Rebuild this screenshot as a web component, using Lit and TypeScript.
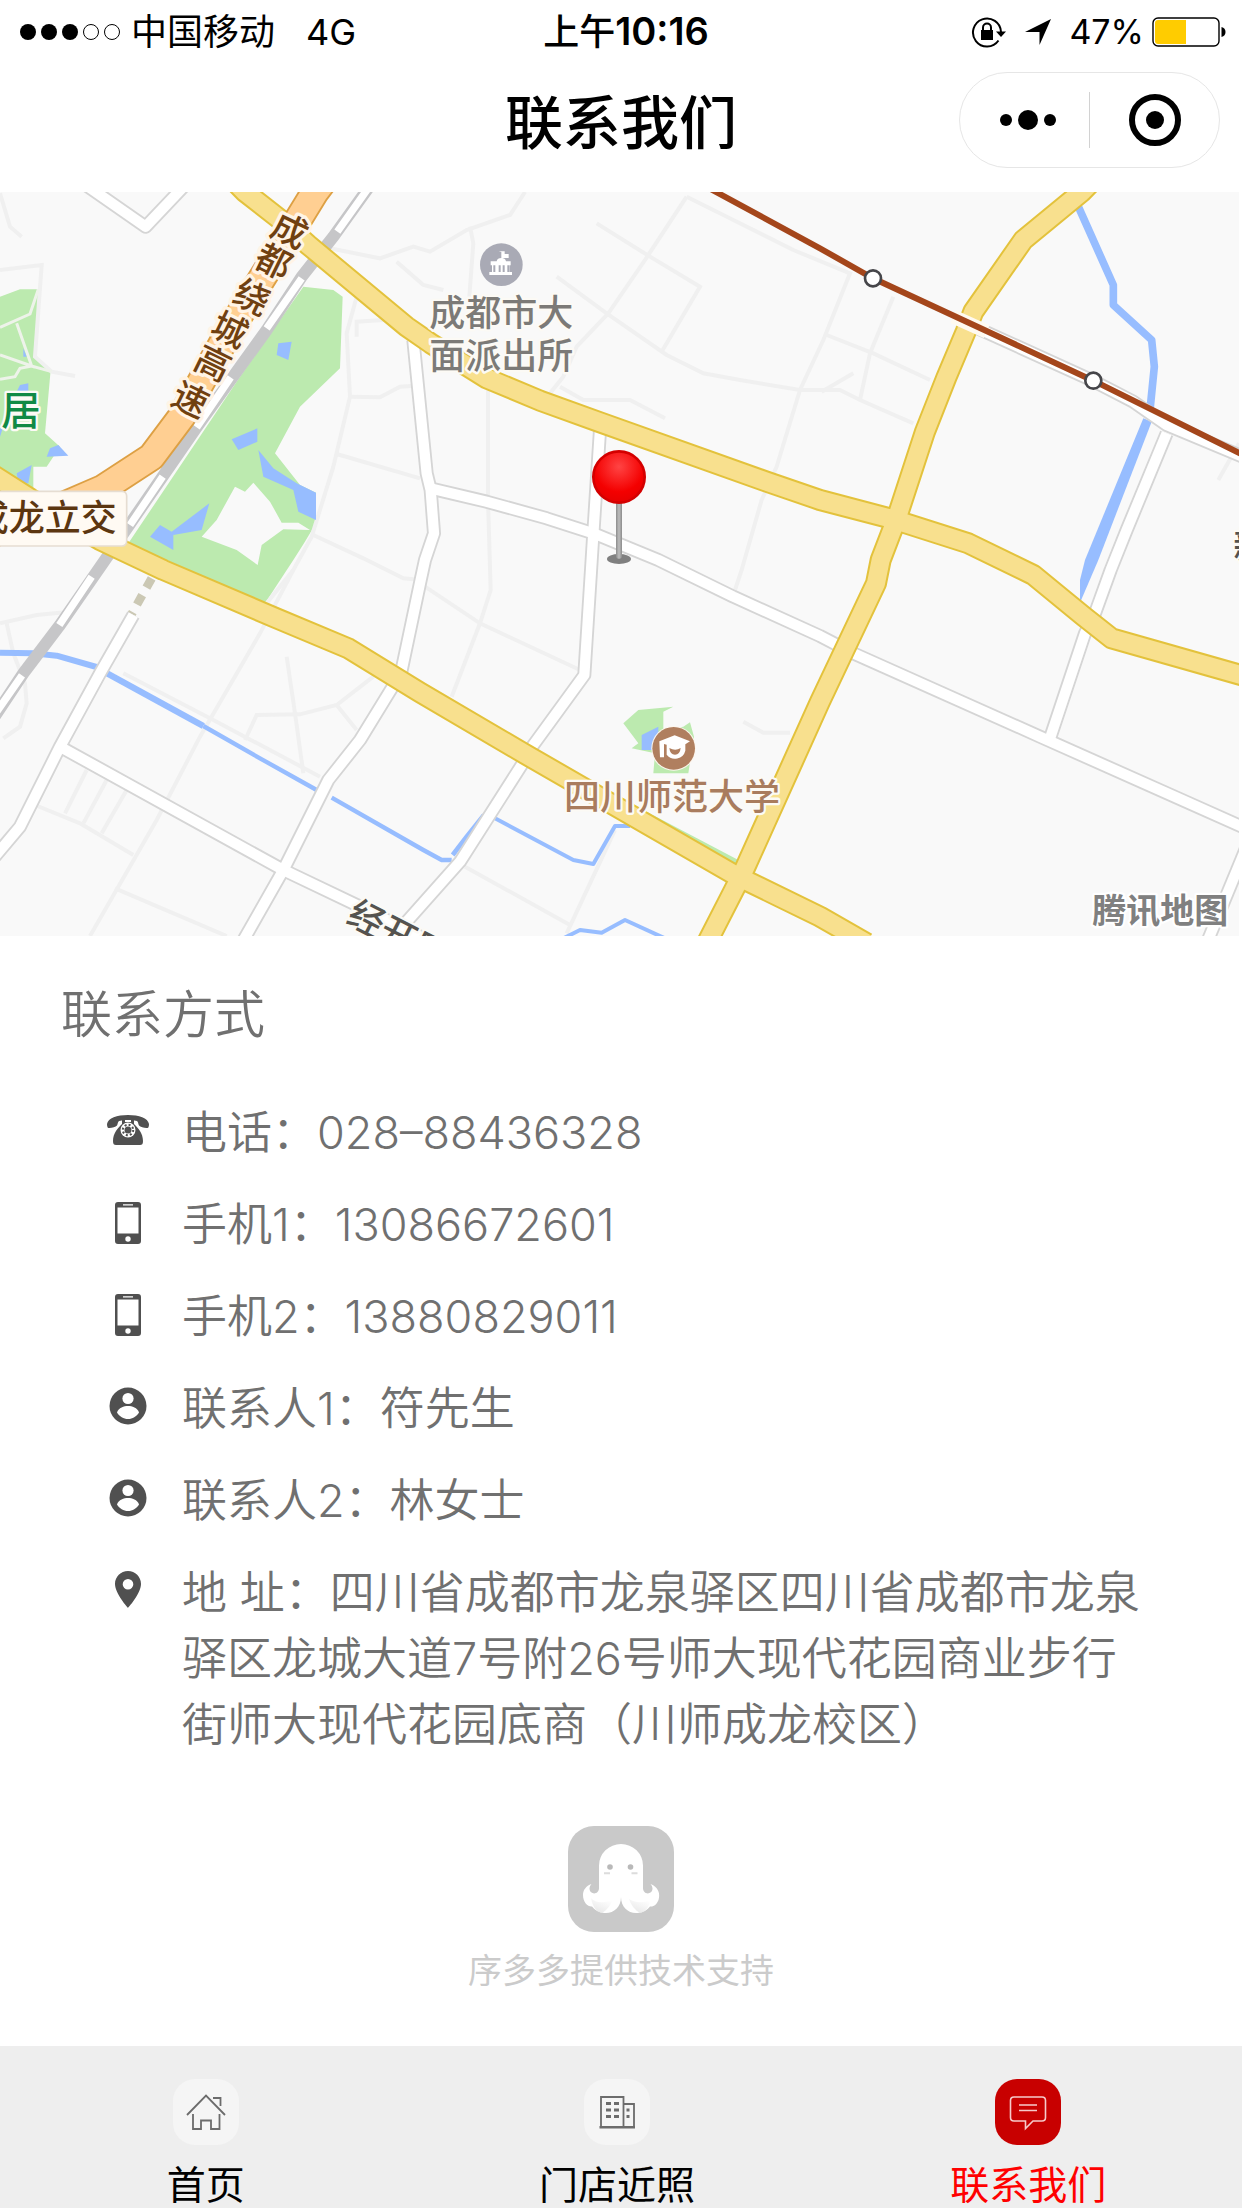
import { LitElement, html, css, svg } from "lit";
import { customElement, property } from "lit/decorators.js";
import { classMap } from "lit/directives/class-map.js";

const FONT = css`Inter, "Noto Sans CJK SC", sans-serif`;

/* ---------- map data (canvas units: 3 per CSS pixel) ---------- */

const minorRoads = [
  "M0 240 L125 225 L105 500 L155 545 L225 558",
  "M0 10 L30 110 L65 140",
  "M990 175 L1140 205 L1240 170 L1290 185 L1400 120 L1530 75 L1575 6",
  "M1410 110 L1420 160 L1408 320",
  "M1190 215 L1270 285 L1330 300",
  "M1070 320 L1040 430 L1050 620 L1000 830 L935 1040 L880 1140 L800 1240",
  "M1070 440 L1070 395 L1150 390",
  "M1050 620 L1140 622 L1200 590 L1235 588",
  "M1010 792 L1260 865",
  "M940 1035 L1090 1105 L1210 1165 L1265 1170",
  "M1464 600 L1464 930 L1472 1200 L1440 1300 L1355 1520",
  "M1275 1190 L1440 1300 L1740 1440",
  "M2060 20 L1935 210 L1825 370 L1730 470 L1690 560 L1650 610",
  "M1790 100 L1950 200 L2100 290 L1985 485",
  "M1670 260 L1820 370 L2000 495 L2110 550 L2220 570 L2400 600 L2520 600 L2580 630 L2740 700",
  "M1680 590 L1750 630 L1890 630 L1995 685",
  "M2060 20 L2200 90 L2380 180 L2550 250 L2470 450 L2400 600 L2330 830 L2285 930 L2225 1140 L2205 1200",
  "M2680 320 L2610 490 L2580 630",
  "M2480 435 L2620 490 L2790 570",
  "M2465 605 L2560 550",
  "M3717 760 L3655 870",
  "M0 1300 L110 1275 L210 1265",
  "M20 1300 L40 1390 L75 1480 L80 1540 L60 1610 L10 1645",
  "M880 1140 L780 1330 L600 1640 L470 1890 L270 2238",
  "M860 1400 L885 1570 L910 1750",
  "M735 1650 L770 1575 L900 1573 L1010 1545 L1120 1460",
  "M1010 1545 L1070 1620",
  "M370 1450 L640 1590 L960 1760",
  "M105 1845 L240 1900 L400 1995",
  "M260 1740 L195 1870 M320 1770 L250 1900 M380 1800 L305 1930",
  "M345 2095 L680 2238",
  "M1395 2030 L1710 2205",
  "M1845 1920 L1770 2080 L1700 2230",
  "M2230 1595 L2290 1628 L2370 1628",
];

const whiteRoads = [
  "M250 -20 L437 110 L560 -20",
  "M1240 450 L1280 850 L1292 900 L1302 1030 L1275 1110 L1262 1170 L1205 1440 L1175 1495 L1080 1650 L985 1770 L850 2040 L725 2260",
  "M1290 895 L1460 935 L1640 985 L1780 1030 L1975 1110 L2200 1220 L2460 1338 L2560 1390 L3120 1640 L3535 1825 L3730 1912",
  "M1800 720 L1780 1030 L1775 1110 L1753 1455 L1600 1665 L1565 1725 L1380 2015 L1180 2240",
  "M400 1275 L300 1450 L180 1670 L60 1910 L-20 2005",
  "M180 1670 L850 2040 L1080 2150 L1300 2260",
  "M2900 400 L3270 568 L3400 635 L3500 705 L3740 805",
  "M3500 730 L3380 1020 L3332 1140 L3285 1270 L3255 1330 L3150 1645",
  "M3740 1970 L3620 2260",
];

const yellowRoads = [
  "M690 -40 L735 6 L840 88 L925 165 L1220 410 L1292 460 L1460 565 L1620 632 L1800 697 L2300 875 L2460 930 L2670 985 L2905 1060 L3100 1155 L3250 1278 L3335 1345 L3740 1460",
  "M3290 -40 L3245 6 L3070 150 L2920 365 L2897 425 L2840 560 L2775 725 L2690 985 L2642 1110 L2628 1180 L2460 1535 L2230 2045 L2120 2260",
  "M-20 855 L90 925 L300 1050 L490 1140 L825 1283 L1045 1375 L1260 1507 L1580 1695 L2210 2058 L2460 2180 L2600 2260",
];

const highway = "M980 -40 L945 6 L820 210 L690 420 L545 680 L455 800 L310 895 L160 960 L-20 1030";

const railway = "M1115 -20 L1000 140 L905 260 L800 420 L590 712 L315 1110 L180 1305 L70 1450 L-20 1585";
const railwayGaps =
  "M1115 -20 L1012 125 M905 265 L800 415 M692 562 L590 712 M488 860 L390 1005 M275 1160 L178 1305 M66 1456 L-20 1580";

const parks = [
  "M0 320 L60 298 L115 298 L108 500 L152 540 L135 730 L180 770 L140 830 L100 830 L100 920 L0 905Z",
  "M910 290 L1000 300 L1028 320 L1020 535 L900 650 L825 790 L900 885 L948 908 L948 1000 L912 1060 L880 1110 L795 1240 L385 1060 L720 560Z",
  "M1870 1600 L1915 1560 L2020 1550 L1990 1565 L1990 1620 L2050 1610 L2070 1597 L2082 1640 L2065 1750 L1960 1750 L1965 1690 L1895 1675 L1915 1660Z",
  "M1930 1860 L2215 2010 L2200 2030 L1930 1885Z",
];

const lakes = [
  "M835 460 L875 455 L865 510 L830 495Z",
  "M695 748 L772 715 L772 755 L715 780Z",
  "M775 780 L820 835 L890 880 L948 908 L948 990 L895 965 L880 900 L790 860Z",
  "M628 940 L605 1020 L520 1035 L520 1080 L450 1040 L480 1005 L515 1025Z",
  "M140 800 L150 775 L175 765 L205 797Z",
  "M50 850 L95 825 L85 880 L55 880Z",
  "M50 605 L60 585 L85 580 L85 605Z",
  "M0 715 L8 715 L0 740Z M70 475 L80 500 L70 500Z",
  "M1925 1635 L1975 1610 L1975 1680 L1925 1680Z",
  "M3430 685 L3455 695 L3295 1110 L3240 1238 L3240 1170 L3255 1110Z",
];

const rivers: Array<[string, number]> = [
  ["M3235 50 L3340 285 L3340 345 L3455 450 L3463 530 L3450 660", 23],
  ["M0 1388 L100 1390 L170 1397 L300 1434", 18],
  ["M318 1448 L610 1608", 19],
  ["M610 1608 L780 1705 L950 1800", 13],
  ["M995 1823 L1270 1980 L1325 2010 L1355 2010", 13],
  ["M1358 1995 L1400 1940 L1452 1875", 14],
  ["M1485 1885 L1720 2010 L1780 2022 L1845 1908 L1890 1908", 12],
  ["M1690 2245 L1740 2220 L1805 2228 L1875 2190 L1995 2245", 12],
];

const highwayName: Array<[string, number, number]> = [
  ["成", 870, 120],
  ["都", 822, 213],
  ["绕", 757, 320],
  ["城", 690, 418],
  ["高", 640, 518],
  ["速", 572, 628],
];

@customElement("location-map")
class LocationMap extends LitElement {
  static styles = css`
    :host { display: block; }
    .map { display: block; width: 100%; height: auto; font-family: ${FONT}; }
    .land { fill: #f9f9f9; }
    .minor { fill: none; stroke: #f0f0f0; stroke-width: 12; }
    .edge { fill: none; stroke: #d5d5d5; stroke-width: 42; stroke-linejoin: round; }
    .lane { fill: none; stroke: #fff; stroke-width: 31; stroke-linejoin: round; }
    .avenue-edge { fill: none; stroke: #e3c23c; stroke-width: 66; stroke-linejoin: round; }
    .avenue { fill: none; stroke: #f8e08e; stroke-width: 54; stroke-linejoin: round; }
    .highway-edge { fill: none; stroke: #dda044; stroke-width: 88; stroke-linejoin: round; }
    .highway { fill: none; stroke: #ffcf92; stroke-width: 77; stroke-linejoin: round; }
    .rail { fill: none; stroke: #c6c6c8; stroke-width: 36; }
    .rail-gap { fill: none; stroke: #fff; stroke-width: 22; }
    .park { fill: #bceaaf; }
    .path { fill: none; stroke: #eef3ea; stroke-width: 9; }
    .water { fill: #97bdff; }
    .river { fill: none; stroke: #97bdff; stroke-linejoin: round; }
    .metro-halo { fill: none; stroke: #fffaf0; stroke-width: 42; }
    .metro { fill: none; stroke: #a4461b; stroke-width: 18; }
    .station { fill: #fff; stroke: #46464a; stroke-width: 8; }
    .tunnel { fill: none; stroke: #cbc8b4; stroke-width: 26; stroke-dasharray: 32 26; }
    .label { font-size: 108px; font-weight: 500; paint-order: stroke; stroke: #fcfaf5; stroke-width: 14; stroke-linejoin: round; }
    .gray { fill: #7c7a77; }
    .brown { fill: #a97c5e; }
    .green { fill: #118a45; font-size: 118px; }
    .road-name { fill: #704010; font-size: 106px; text-anchor: middle; stroke: #fff4e6; stroke-width: 20; }
    .junction { fill: #5c3610; stroke: none; }
    .plate { fill: #fffaf3; stroke: #e6ddd2; stroke-width: 5; }
    .dark { fill: #55534f; }
    .provider { fill: #808080; font-size: 102px; font-weight: 700; stroke: #fff; }
  `;

  render() {
    return html`
      <svg class="map" viewBox="0 6 3726 2232" role="img" aria-label="地图">
        <defs>
          <clipPath id="frame"><rect x="0" y="6" width="3717" height="2232"></rect></clipPath>
          <radialGradient id="ball" cx="50%" cy="30%" r="70%">
            <stop offset="0" stop-color="#ff4444"></stop>
            <stop offset="0.7" stop-color="#f40000"></stop>
            <stop offset="1" stop-color="#e60000"></stop>
          </radialGradient>
          <linearGradient id="needle" x1="0" x2="1">
            <stop offset="0" stop-color="#8c8c8c"></stop>
            <stop offset="0.5" stop-color="#bdbdbd"></stop>
            <stop offset="1" stop-color="#8c8c8c"></stop>
          </linearGradient>
        </defs>
        <g clip-path="url(#frame)">
          <rect class="land" x="0" y="6" width="3717" height="2232"></rect>
          ${parks.map((d) => svg`<path class="park" d=${d}></path>`)}
          <path class="land" d="M705 890 L735 905 L760 878 L810 935 L845 998 L895 998 L930 1020 L850 1018 L785 1065 L773 1125 L710 1080 L605 1040 L650 990Z"></path>
          ${minorRoads.map((d) => svg`<path class="minor" d=${d}></path>`)}
          <path class="path" d="M0 412 L90 372 L115 298 M50 400 L95 528 L0 495 M155 545 L95 528 L60 535 L45 560 L0 568"></path>
          ${lakes.map((d) => svg`<path class="water" d=${d}></path>`)}
          ${rivers.map(([d, w]) => svg`<path class="river" d=${d} stroke-width=${w}></path>`)}
          <path class="tunnel" d="M455 1165 L395 1272"></path>
          ${whiteRoads.map((d) => svg`<path class="edge" d=${d}></path>`)}
          ${whiteRoads.map((d) => svg`<path class="lane" d=${d}></path>`)}
          <path class="rail" d=${railway}></path>
          <path class="rail-gap" d=${railwayGaps}></path>
          ${yellowRoads.map((d) => svg`<path class="avenue-edge" d=${d}></path>`)}
          <path class="highway-edge" d=${highway}></path>
          ${yellowRoads.map((d) => svg`<path class="avenue" d=${d}></path>`)}
          <path class="highway" d=${highway}></path>
          <path class="metro-halo" d="M2860 380 L2960 425"></path>
          <path class="metro" d="M2130 -4 L2460 175 L2619 265 L3280 572 L3740 800"></path>
          <circle class="station" cx="2619" cy="265" r="24"></circle>
          <circle class="station" cx="3280" cy="572" r="24"></circle>

          ${highwayName.map(
            ([c, x, y]) => svg`<text class="label road-name" transform="translate(${x} ${y}) rotate(26)" y="40">${c}</text>`
          )}
          <rect class="plate" x="-20" y="904" width="400" height="164" rx="14"></rect>
          <text class="label junction" x="-82" y="1024">成龙立交</text>
          <text class="label green" x="4" y="704">居</text>
          <text class="label gray" x="1288" y="409">成都市大</text>
          <text class="label gray" x="1288" y="536">面派出所</text>
          <text class="label brown" x="1692" y="1860">四川师范大学</text>
          <text class="label dark" transform="translate(1034 2196) rotate(27)">经开区</text>
          <text class="label dark" x="3700" y="1108">新</text>
          <text class="label provider" x="3277" y="2198">腾讯地图</text>

          <circle cx="1504" cy="224" r="64" fill="#a9aab5"></circle>
          <g fill="#fff">
            <path d="M1496 184h18v8h12v12h-18v6h-4v-24z"></path>
            <path d="M1490 214q2-10 14-10t14 10h14v12h-4v20h8v9h-68v-9h8v-20h-4v-12zM1480 226v20h6v-20zM1496 226v20h6v-20zM1508 226v20h6v-20zM1522 226v20h5v-20z" fill-rule="evenodd"></path>
          </g>
          <circle cx="2021" cy="1675" r="67" fill="#fdf6ee"></circle>
          <circle cx="2021" cy="1675" r="64" fill="#b07f5f"></circle>
          <path d="M1978 1654 L2024 1636 L2070 1654 L2056 1663 V1682 A32 32 0 0 1 2000 1694 V1664 L1992 1662 V1702 H1980Z" fill="#fff"></path>
          <path d="M2008 1674q18 10 34 0q-2 20-17 20t-17-20z" fill="#b07f5f"></path>

          <ellipse cx="1857" cy="1107" rx="36" ry="15" fill="#808080"></ellipse>
          <rect x="1848" y="930" width="18" height="176" rx="8" fill="url(#needle)"></rect>
          <circle cx="1857" cy="861" r="77" fill="url(#ball)" stroke="#d40000" stroke-width="8"></circle>
        </g>
      </svg>
    `;
  }
}

/* ---------- icons ---------- */

const contactIcons: Record<string, unknown> = {
  phone: html`<svg class="icon" viewBox="0 0 42 42" aria-hidden="true">
    <path fill="#505050" d="M0 14C1 8 10 5 21 5s20 3 21 9c0 2-.5 4-1.500 4-3 .3-7-1-8.500-2.500C31 14 31.500 12 30 11c-3-1.500-15-1.500-18 0-1.500 1-1 3-2 4.500C8.500 17 4.500 18.300 1.500 18 .5 18 0 16 0 14z"/>
    <path fill="#505050" d="M15 10h3v2h6v-2h3v4c4 4 9 9 9 17 0 3-1 4-3 4H9c-2 0-3-1-3-4 0-8 5-13 9-17z"/>
    <circle cx="21" cy="20" r="7.500" fill="#fff"/>
    <circle cx="21" cy="20" r="5.200" fill="none" stroke="#505050" stroke-width="2" stroke-dasharray="2 2.080"/>
    <circle cx="21" cy="20" r="3.500" fill="#505050"/>
  </svg>`,
  mobile: html`<svg class="icon" viewBox="0 0 42 42" aria-hidden="true">
    <path fill="#505050" fill-rule="evenodd" d="M11 0h20q3 0 3 3v36q0 3-3 3H11q-3 0-3-3V3q0-3 3-3zM10.500 5.500v26h21v-26zM16 2.200v1.300h10V2.200z"/>
    <circle cx="21" cy="37" r="2.700" fill="#fff"/>
  </svg>`,
  person: html`<svg class="icon" viewBox="0 0 42 42" aria-hidden="true">
    <circle cx="21" cy="20" r="18.500" fill="#505050"/>
    <circle cx="21" cy="12.500" r="5.600" fill="#fff"/>
    <path fill="#fff" d="M10 26.500c1.500-5 7-6.500 11-6.500s9.500 1.500 11 6.500C29.500 30.500 25.500 33 21 33s-8.500-2.500-11-6.500z"/>
  </svg>`,
  pin: html`<svg class="icon" viewBox="0 0 42 42" aria-hidden="true">
    <path fill="#505050" fill-rule="evenodd" d="M21 1c7.200 0 13 5.800 13 13 0 9.500-13 24-13 24S8 23.500 8 14C8 6.800 13.800 1 21 1zM21 9a5.300 5.300 0 1 0 0 10.600A5.300 5.300 0 1 0 21 9z"/>
  </svg>`,
};

const tabIcons: Record<string, unknown> = {
  home: svg`<g fill="none" stroke="#6c6c6c" stroke-width="1.800">
    <path d="M14 36 33 16.500 52 36"/><path d="M40 19h7.500v8"/>
    <path d="M20 35v15h8V41.500h10V50h8.500V35"/></g>`,
  shop: svg`<g fill="none" stroke="#6c6c6c" stroke-width="1.800">
    <path d="M17 48V18h22.500v30M39.500 25H50v23"/><path d="M15.500 48.200h35.500" stroke-width="2.400"/>
    <path d="M22 24.500h5M30 24.500h5M22 31h5M30 31h5M22 37.500h5M30 37.500h5M42.500 31h3M42.500 37.500h3" stroke-width="3"/></g>`,
  chat: svg`<g fill="none" stroke="#f6caca" stroke-width="1.600">
    <path d="M19 18h28q3.500 0 3.500 3.500v17q0 3.500-3.500 3.500h-9l-7.500 7.500V42H19q-3.500 0-3.500-3.500v-17Q15.500 18 19 18z"/>
    <path d="M24 26h18M24 31.500h18"/></g>`,
};

@customElement("status-bar")
class StatusBar extends LitElement {
  static styles = css`
    :host { display: block; font-family: ${FONT}; color: #000; }
    .bar { display: grid; grid-template-columns: 1fr auto 1fr; align-items: center; height: 62px; padding: 0 16px 0 20px; font-size: 36px; line-height: 62px; }
    .left, .right { display: flex; align-items: center; }
    .right { justify-content: flex-end; }
    .dots { width: 101px; height: 18px; margin-right: 10px; }
    .carrier { margin-right: 31px; }
    .time { padding-left: 6px; font-size: 38px; font-weight: 600; }
    .period { font-size: 36px; font-weight: 500; }
    .lock { width: 36px; height: 32px; margin-right: 17px; }
    .arrow { width: 28px; height: 28px; margin-right: 17px; }
    .level { font-size: 34px; }
    .battery { width: 74px; height: 30px; margin-left: 8px; }
  `;

  render() {
    return html`
      <div class="bar">
        <div class="left">
          <svg class="dots" viewBox="0 0 101 18" aria-hidden="true">
            ${[0, 1, 2, 3, 4].map(
              (i) => svg`<circle cx=${8 + i * 21} cy="9" r=${i < 3 ? 8 : 7.5} fill=${i < 3 ? "#000" : "none"} stroke=${i < 3 ? "none" : "#000"}></circle>`
            )}
          </svg>
          <span class="carrier">中国移动</span>
          <span>4G</span>
        </div>
        <div class="time"><span class="period">上午</span>10:16</div>
        <div class="right">
          <svg class="lock" viewBox="0 0 36 32" aria-hidden="true">
            <path d="M27.500 24.500A14 14 0 1 1 30 16" fill="none" stroke="#000" stroke-width="2"/>
            <path d="M25 15.500h10L30 21z"/>
            <rect x="10" y="14" width="12" height="10"/>
            <path d="M12 15v-3.500a4 4 0 0 1 8 0V15" fill="none" stroke="#000" stroke-width="2"/>
          </svg>
          <svg class="arrow" viewBox="0 0 28 28" aria-hidden="true"><path d="M27 1 15.500 27V14H1z"/></svg>
          <span class="level">47%</span>
          <svg class="battery" viewBox="0 0 74 30" aria-hidden="true">
            <rect x="1" y="1" width="66" height="28" rx="5" fill="none" stroke="#000" stroke-width="1.400"/>
            <path d="M6 3H34V27H6Q3 27 3 24V6Q3 3 6 3z" fill="#ffcc00"/>
            <path d="M69.500 10q4 1 4 5t-4 5z"/>
          </svg>
        </div>
      </div>
    `;
  }
}

@customElement("title-bar")
class TitleBar extends LitElement {
  static styles = css`
    :host { display: block; font-family: ${FONT}; color: #000; }
    .bar { display: grid; grid-template-columns: 1fr auto 1fr; align-items: center; height: 130px; padding: 0 22px 14px; box-sizing: border-box; }
    .title { grid-column: 2; margin: 0; padding-top: 6px; font-size: 58px; line-height: 84px; font-weight: 500; }
    .capsule { justify-self: end; display: flex; align-items: center; box-sizing: border-box; width: 261px; height: 96px; border: 1px solid #e6e6e6; border-radius: 48px; background: #fff; }
    .action { flex: 1 1 50%; box-sizing: border-box; display: flex; align-items: center; justify-content: center; height: 100%; padding: 0; border: 0; background: none; }
    .more { padding-left: 6px; }
    .divider { flex: none; width: 1px; height: 56px; background: #d2d2d2; }
    .glyph { flex: none; width: 60px; height: 56px; }
  `;

  render() {
    return html`
      <header class="bar">
        <h1 class="title">联系我们</h1>
        <div class="capsule">
          <button class="action more" aria-label="更多">
            <svg class="glyph" viewBox="0 0 60 56"><circle cx="8" cy="28" r="6"/><circle cx="30" cy="28" r="10"/><circle cx="52" cy="28" r="6"/></svg>
          </button>
          <span class="divider"></span>
          <button class="action" aria-label="关闭">
            <svg class="glyph" viewBox="0 0 60 56"><circle cx="30" cy="28" r="23" fill="none" stroke="#000" stroke-width="6"/><circle cx="30" cy="28" r="9"/></svg>
          </button>
        </div>
      </header>
    `;
  }
}

interface Contact {
  icon: string;
  text: string;
  href?: string;
}

@customElement("contact-list")
class ContactList extends LitElement {
  @property({ attribute: false }) items: Contact[] = [];

  static styles = css`
    :host { display: block; font-family: ${FONT}; font-weight: 350; color: #707070; }
    .panel { padding: 41px 92px 0 61px; }
    .heading { margin: 0; font-size: 51px; line-height: 76px; font-weight: inherit; }
    .list { display: flex; flex-direction: column; gap: 26px; margin: 47px 0 0; padding: 0 0 0 46px; list-style: none; }
    .row { display: flex; align-items: flex-start; gap: 33px; font-size: 45px; line-height: 66px; }
    .icon { flex: none; width: 42px; height: 42px; margin-top: 10px; }
    .text { min-width: 0; color: inherit; text-decoration: none; }
  `;

  render() {
    return html`
      <section class="panel">
        <h2 class="heading">联系方式</h2>
        <ul class="list">
          ${this.items.map(
            (c) => html`<li class="row">
              ${contactIcons[c.icon]}
              ${c.href ? html`<a class="text" href=${c.href}>${c.text}</a>` : html`<span class="text">${c.text}</span>`}
            </li>`
          )}
        </ul>
      </section>
    `;
  }
}

@customElement("tech-support")
class TechSupport extends LitElement {
  static styles = css`
    :host { display: block; font-family: ${FONT}; }
    .support { display: flex; flex-direction: column; align-items: center; gap: 15px; padding: 68px 0 51px; }
    .logo { width: 106px; height: 106px; }
    .text { margin: 0; color: #cbcbcb; font-size: 34px; line-height: 48px; }
  `;

  render() {
    return html`
      <footer class="support">
        <svg class="logo" viewBox="0 0 106 106" aria-hidden="true">
          <defs>
            <linearGradient id="limb" x1="0" y1="1" x2="0.600" y2="0">
              <stop offset="0" stop-color="#dedede"/><stop offset="1" stop-color="#fff"/>
            </linearGradient>
          </defs>
          <rect width="106" height="106" rx="26" fill="#c9c9c9"/>
          <path fill="#fff" d="M31 39.500a22 21.500 0 0 1 44 0V62c0 7 9 7 9.500 1 0-2-.5-3-2-5 8 3 10 10 8 16-1.500 4-4.500 7-8.500 6.500C78 86 72 87 68 87c-8 0-15-6-15-16 0 10-7 16-15 16-4 0-10-1-14-6.500-4 .5-9-4-9-11.500 0-5 3-9 8.500-11-1.500 2-2 3-2 5 .5 6 9.500 6 9.500-1z"/>
          <path fill="url(#limb)" d="M23 72c4 5 14 6 22 1-2 6-6 11-11 14-5-1-9-5-11-15z" opacity=".8"/>
          <path fill="url(#limb)" d="M83 72c-4 5-14 6-22 1 2 6 6 11 11 14 5-1 9-5 11-15z" opacity=".8"/>
          <g fill="#b9b9b9"><circle cx="42" cy="41" r="2.800"/><circle cx="62.500" cy="41" r="2.800"/></g>
          <path d="M36 47.300h6M63.500 47.300h6" stroke="#dcdcdc" stroke-width="2"/>
        </svg>
        <p class="text">序多多提供技术支持</p>
      </footer>
    `;
  }
}

@customElement("tab-bar")
class TabBar extends LitElement {
  static styles = css`
    :host { display: block; font-family: ${FONT}; }
    .tabs { display: grid; grid-template-columns: repeat(3, 1fr); padding: 33px 8px 0 0; background: #eee; }
    .tab { display: flex; flex-direction: column; align-items: center; gap: 17px; color: #000; text-decoration: none; font-size: 39px; line-height: 46px; }
    .tab.active { color: #f00; }
    .glyph { width: 66px; height: 66px; }
    .tile { fill: #f5f5f5; }
    .active .tile { fill: #c80000; }
  `;

  private tabs = [
    { icon: "home", label: "首页", href: "#home" },
    { icon: "shop", label: "门店近照", href: "#photos" },
    { icon: "chat", label: "联系我们", href: "#contact", active: true },
  ];

  render() {
    return html`
      <nav class="tabs">
        ${this.tabs.map(
          (t) => html`<a class=${classMap({ tab: true, active: !!t.active })} href=${t.href}>
            <svg class="glyph" viewBox="0 0 66 66" aria-hidden="true">
              <rect class="tile" width="66" height="66" rx="22"></rect>
              ${tabIcons[t.icon]}
            </svg>
            <span>${t.label}</span>
          </a>`
        )}
      </nav>
    `;
  }
}

@customElement("app-root")
class AppRoot extends LitElement {
  static styles = css`
    :host { display: flex; flex-direction: column; min-height: 100vh; background: #fff; }
    .tabs { margin-top: auto; }
  `;

  private contacts: Contact[] = [
    { icon: "phone", text: "电话：028–88436328", href: "tel:02888436328" },
    { icon: "mobile", text: "手机1：13086672601", href: "tel:13086672601" },
    { icon: "mobile", text: "手机2：13880829011", href: "tel:13880829011" },
    { icon: "person", text: "联系人1：符先生" },
    { icon: "person", text: "联系人2：林女士" },
    {
      icon: "pin",
      text: "地 址：四川省成都市龙泉驿区四川省成都市龙泉驿区龙城大道7号附26号师大现代花园商业步行街师大现代花园底商（川师成龙校区）",
    },
  ];

  render() {
    return html`
      <status-bar></status-bar>
      <title-bar></title-bar>
      <location-map></location-map>
      <contact-list .items=${this.contacts}></contact-list>
      <tech-support></tech-support>
      <tab-bar class="tabs"></tab-bar>
    `;
  }
}
